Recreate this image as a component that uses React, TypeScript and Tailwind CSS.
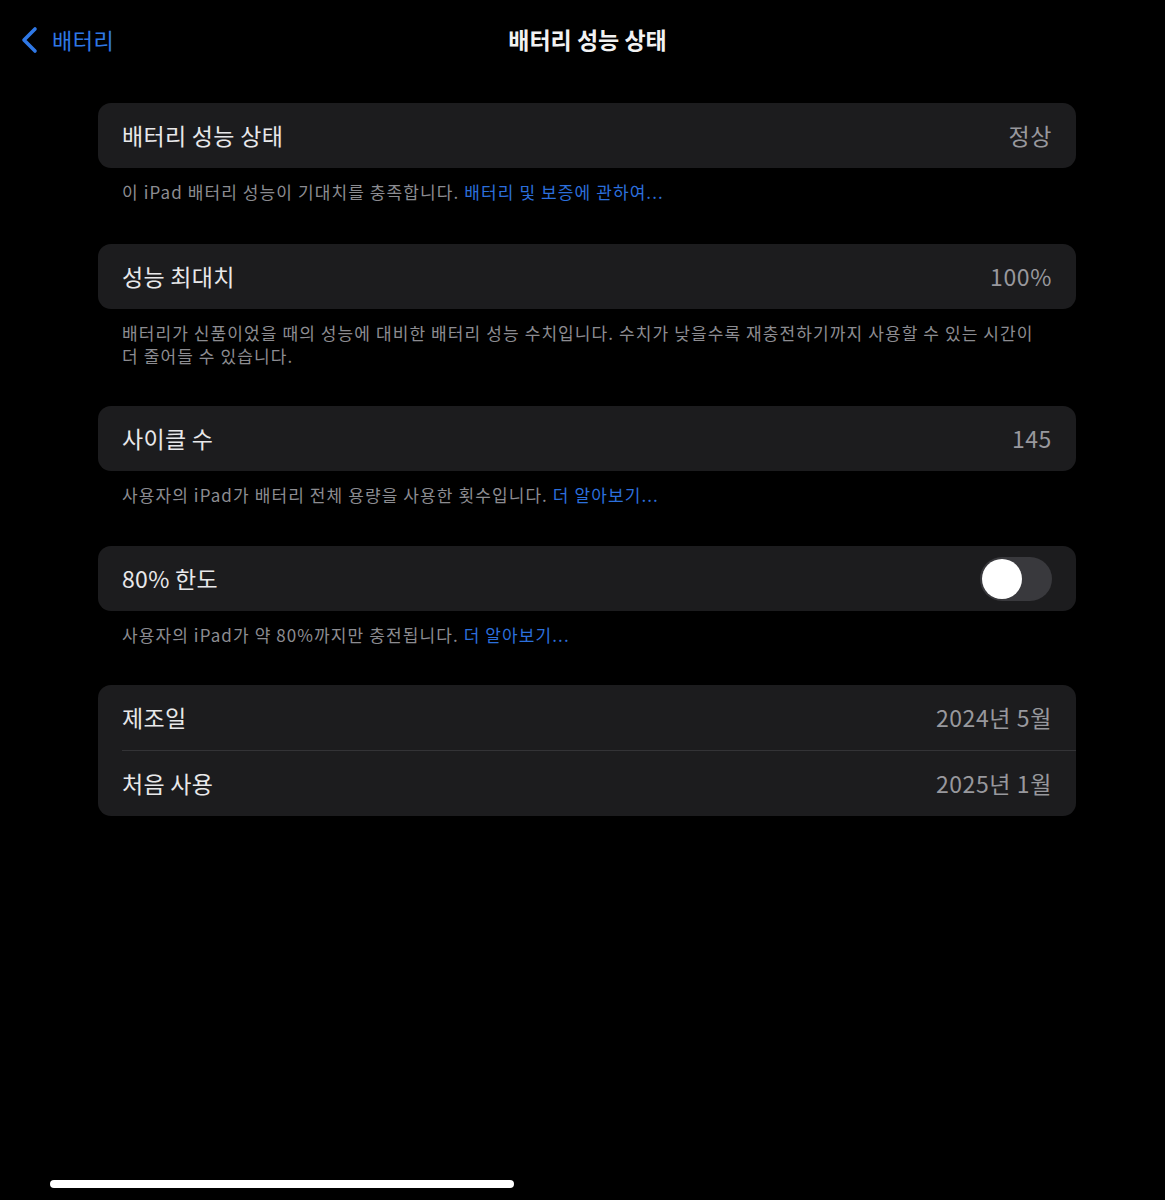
import React from 'react'

const font = { fontFamily: '"Noto Sans CJK KR", "Noto Sans", sans-serif' }

function Row({ label, value, children }: { label: string; value?: string; children?: React.ReactNode }) {
  return (
    <div className="flex items-center justify-between h-[65px] px-6">
      <span className="text-[23px] text-[#e8e8ea] tracking-[0.3px]">{label}</span>
      {value && <span className="text-[23px] text-[#98989d] tracking-[0.6px]">{value}</span>}
      {children}
    </div>
  )
}

function Footer({ children }: { children: React.ReactNode }) {
  return <p className="px-6 pt-[12px] text-[17px] leading-[23px] tracking-[1.1px] text-[#8c8c91]">{children}</p>
}

function Link({ children }: { children: React.ReactNode }) {
  return <span className="text-[#2c6fdc]">{children}</span>
}

export default function App() {
  return (
    <div className="relative w-[1165px] h-[1200px] bg-black overflow-hidden" style={font}>
      {/* nav bar */}
      <div className="relative flex items-center h-[80px]">
        <div className="flex items-center pl-[18px] gap-[12px] text-[#2f78e6]">
          <svg width="22" height="28" viewBox="0 0 22 28" fill="none">
            <path d="M17 3 L6 14 L17 25" stroke="#2f78e6" strokeWidth="3.6" strokeLinecap="round" strokeLinejoin="round" />
          </svg>
          <span className="text-[22px] tracking-[0.5px] -mt-[2px]">배터리</span>
        </div>
        <div className="absolute left-0 right-0 text-center text-[23px] font-bold text-[#f2f2f2] pointer-events-none -mt-[2px] pl-[10px]">
          배터리 성능 상태
        </div>
      </div>

      <div className="flex flex-col px-[98px] pt-[23px] w-[1174px]">
        <div className="rounded-[13px] bg-[#1c1c1e]">
          <Row label="배터리 성능 상태" value="정상" />
        </div>
        <Footer>
          이 iPad 배터리 성능이 기대치를 충족합니다. <Link>배터리 및 보증에 관하여...</Link>
        </Footer>

        <div className="rounded-[13px] bg-[#1c1c1e] mt-[41px]">
          <Row label="성능 최대치" value="100%" />
        </div>
        <Footer>
          배터리가 신품이었을 때의 성능에 대비한 배터리 성능 수치입니다. 수치가 낮을수록 재충전하기까지 사용할 수 있는 시간이
          <br />더 줄어들 수 있습니다.
        </Footer>

        <div className="rounded-[13px] bg-[#1c1c1e] mt-[39px]">
          <Row label="사이클 수" value="145" />
        </div>
        <Footer>
          사용자의 iPad가 배터리 전체 용량을 사용한 횟수입니다. <Link>더 알아보기...</Link>
        </Footer>

        <div className="rounded-[13px] bg-[#1c1c1e] mt-[40px]">
          <Row label="80% 한도">
            <div className="flex items-center w-[72px] h-[44px] rounded-full bg-[#39393d] p-[2px]">
              <div className="w-[40px] h-[40px] rounded-full bg-white" />
            </div>
          </Row>
        </div>
        <Footer>
          사용자의 iPad가 약 80%까지만 충전됩니다. <Link>더 알아보기...</Link>
        </Footer>

        <div className="rounded-[13px] bg-[#1c1c1e] mt-[39px]">
          <Row label="제조일" value="2024년 5월" />
          <div className="ml-6 h-px bg-[#333336]" />
          <Row label="처음 사용" value="2025년 1월" />
        </div>
      </div>

      {/* home indicator */}
      <div className="absolute left-[50px] top-[1180px] w-[464px] h-[8px] rounded-full bg-white" />
    </div>
  )
}
